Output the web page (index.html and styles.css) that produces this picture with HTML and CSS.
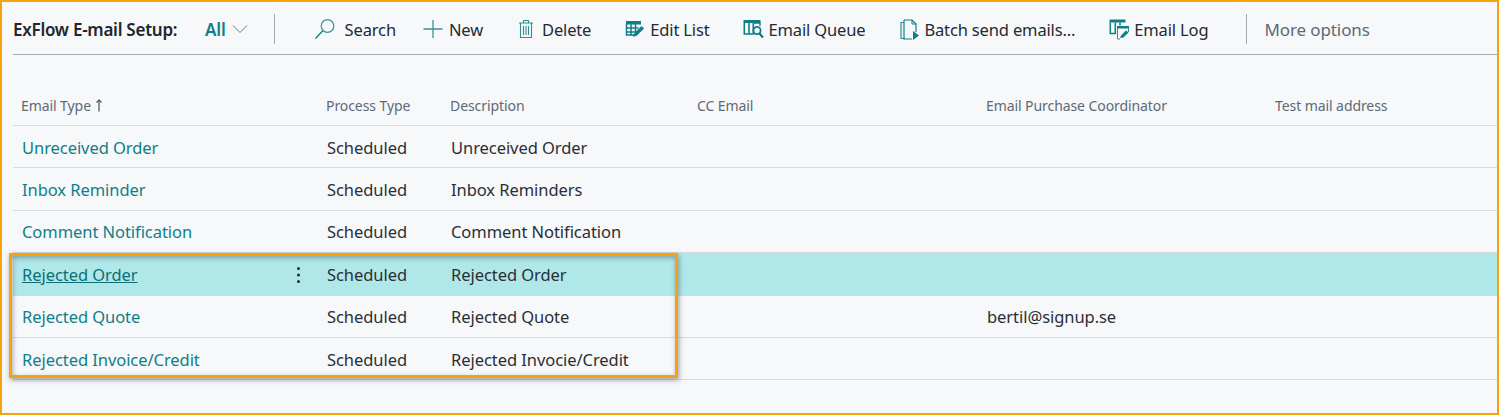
FILE: index.html
```html
<!DOCTYPE html>
<html lang="en">
<head>
<meta charset="utf-8">
<title>ExFlow E-mail Setup</title>
<link rel="stylesheet" href="styles.css">
</head>
<body>
<div class="frame">
  <div class="bar">
    <span class="title">ExFlow E-mail Setup:</span>
    <span class="view">All</span>
    <svg class="chev" width="16" height="10" viewBox="0 0 16 10"><path d="M1 1.500l7 7 7-7" fill="none" stroke="#6b7a82" stroke-width="1"/></svg>
    <span class="sep sep-a"></span>
    <span class="cmd cmd-search">
      <svg width="22" height="22" viewBox="0 0 22 22"><circle cx="13.500" cy="8" r="6.300" fill="none" stroke="#3f8f96" stroke-width="1.200"/><path d="M9 12.600L1.500 20.500" stroke="#0f858c" stroke-width="1.400"/></svg>Search</span>
    <span class="cmd cmd-new">
      <svg width="20" height="20" viewBox="0 0 20 20"><path d="M10 1v18M0.500 10h19" stroke="#3f8f96" stroke-width="1.300"/></svg>New</span>
    <span class="cmd cmd-delete">
      <svg width="16" height="20" viewBox="0 0 16 20"><path d="M1 4h14M5.500 3.500V1.500h5V3.500M2.500 4v14.500h11V4M5.500 7v9M8 7v9M10.500 7v9" fill="none" stroke="#2b8f96" stroke-width="1.100"/></svg>Delete</span>
    <span class="cmd cmd-edit">
      <svg width="20" height="18" viewBox="0 0 20 18"><path d="M1 1h15v3.500H1z" fill="#0f7f86"/><path d="M1.500 4v11h9M1.500 8h12M1.500 12h9M6 4v11M10.500 4v8" fill="none" stroke="#0f7f86" stroke-width="1.500"/><path d="M8 17l1.500-4L16.500 6l2.500 2.500-7 7z" fill="#0f7f86"/></svg>Edit List</span>
    <span class="cmd cmd-queue">
      <svg width="21" height="20" viewBox="0 0 21 20"><path d="M0.500 1h17v3H0.500z" fill="#0f7f86"/><path d="M1.300 4v11h9V4M6 4v11" fill="none" stroke="#0f7f86" stroke-width="1.600"/><path d="M11 4h6v3" fill="none" stroke="#0f7f86" stroke-width="1.300"/><circle cx="14" cy="11.500" r="3.600" fill="none" stroke="#0f7f86" stroke-width="1.800"/><path d="M16.500 14.500l3.500 4" stroke="#0f7f86" stroke-width="2.200"/></svg>Email Queue</span>
    <span class="cmd cmd-batch">
      <svg width="19" height="21" viewBox="0 0 19 21"><path d="M4 3.500H1v16h4" fill="none" stroke="#2b8f96" stroke-width="1.200"/><path d="M4 1h8l4 4v8M4 1v19h8" fill="none" stroke="#0f7f86" stroke-width="1.200"/><path d="M12 1v4h4" fill="none" stroke="#0f7f86" stroke-width="1"/><path d="M13 12l6 4.500-6 4.500z" fill="#0f7f86"/></svg>Batch send emails...</span>
    <span class="cmd cmd-log">
      <svg width="21" height="21" viewBox="0 0 21 21"><path d="M0.500 0.500h16v3h-16z" fill="#0f7f86"/><path d="M1.300 3.500v11h5v-11M11 3.500v3" fill="none" stroke="#0f7f86" stroke-width="1.500"/><path d="M8 7h12v2.500H8z" fill="#0f7f86"/><path d="M8.500 9v11M8.500 20h2.500M19.500 9v4" fill="none" stroke="#2b8f96" stroke-width="1"/><path d="M11 19l1-2.500 5-5 2.500 2-5 5z" fill="#0f7f86"/></svg>Email Log</span>
    <span class="sep sep-b"></span>
    <span class="more">More options</span>
  </div>

  <div class="row head">
    <span class="first">Email Type<svg class="sort" width="8" height="13" viewBox="0 0 8 13"><path d="M4 12.500V1M1.500 3.500L4 1l2.500 2.500" fill="none" stroke="#5d6870" stroke-width="1.400"/></svg></span>
    <span>Process Type</span>
    <span>Description</span>
    <span>CC Email</span>
    <span>Email Purchase Coordinator</span>
    <span>Test mail address</span>
  </div>
  <div class="row"><a class="link">Unreceived Order</a><span>Scheduled</span><span>Unreceived Order</span><span></span><span></span><span></span></div>
  <div class="row"><a class="link">Inbox Reminder</a><span>Scheduled</span><span>Inbox Reminders</span><span></span><span></span><span></span></div>
  <div class="row"><a class="link">Comment Notification</a><span>Scheduled</span><span>Comment Notification</span><span></span><span></span><span></span></div>
  <div class="row selected"><a class="link current">Rejected Order</a><span>Scheduled</span><span>Rejected Order</span><span></span><span></span><span></span><i class="dots"></i></div>
  <div class="row"><a class="link">Rejected Quote</a><span>Scheduled</span><span>Rejected Quote</span><span></span><span>bertil@signup.se</span><span></span></div>
  <div class="row"><a class="link">Rejected Invoice/Credit</a><span>Scheduled</span><span>Rejected Invocie/Credit</span><span></span><span></span><span></span></div>

  <div class="highlight"></div>
</div>
</body>
</html>
```

FILE: styles.css
```css
* { box-sizing: border-box; }
html, body { margin: 0; padding: 0; }
body {
  width: 1499px;
  height: 415px;
  overflow: hidden;
  font-family: "Noto Sans", "Open Sans", sans-serif;
  color: #2a2f35;
  background: #f7f8fa;
}
.frame {
  position: relative;
  width: 1499px;
  height: 415px;
  border: 2px solid #f7a30c;
  padding: 2px 0 0 11px;
  background: #f7f8fa;
}
.bar {
  display: flex;
  align-items: center;
  height: 51px;
  border-bottom: 1px solid #a3abb2;
  font-size: 16.5px;
  letter-spacing: -0.15px;
}
.title { font-weight: 600; width: 192px; letter-spacing: -0.25px; font-size: 17px; color: #20262c; }
.view { font-weight: 600; color: #0d8087; font-size: 17px; }
.chev { margin-left: 6px; }
.sep { width: 1px; height: 30px; background: #a3abb2; }
.sep-a { margin: 0 39px 0 26px; }
.sep-b { margin-right: 17px; }
.cmd { display: inline-flex; align-items: center; white-space: nowrap; color: #222a33; }
.cmd-search { gap: 9px; margin-right: 27px; }
.cmd-new { gap: 6px; margin-right: 35px; }
.cmd-delete { gap: 8px; margin-right: 34px; }
.cmd-edit { gap: 5px; margin-right: 33px; }
.cmd-queue { gap: 5px; margin-right: 35px; }
.cmd-batch { gap: 5px; margin-right: 34px; }
.cmd-log { gap: 4px; margin-right: 38px; }
.more { color: #5d6a76; font-size: 17px; letter-spacing: -0.1px; }
.row {
  display: grid;
  grid-template-columns: 304px 124px 247px 289px 289px 1fr;
  height: 42.4px;
  padding-top: 1px;
  align-items: center;
  border-bottom: 1px solid #d8dadc;
  font-size: 16.5px;
  letter-spacing: -0.06px;
  padding-left: 9px;
  position: relative;
}
.row:not(.head) > span { margin-left: 1px; }
.head {
  margin-top: 40px;
  height: 31px;
  padding-top: 0;
  align-items: start;
  font-size: 14px;
  line-height: 21px;
  color: #5d6a76;
  letter-spacing: -0.08px;
}
.first { margin-left: -1px; }
.link { color: #0d8087; }
.current { color: #0b6f75; text-decoration: underline; }
.selected { background: #b0e8ea; }
.sort { margin-left: 4px; vertical-align: -1px; }
.dots {
  position: absolute;
  left: 284px;
  top: 14px;
  width: 3px;
  height: 3px;
  border-radius: 50%;
  background: #222a33;
  box-shadow: 0 6.500px 0 #222a33, 0 13px 0 #222a33;
}
.highlight {
  position: absolute;
  left: 7px;
  top: 251px;
  width: 669px;
  height: 125px;
  border: 3px solid #f7a30c;
  box-shadow: 1px 2px 5px rgba(60, 70, 80, 0.5), inset 1px 2px 5px rgba(60, 70, 80, 0.45);
  pointer-events: none;
}
```
